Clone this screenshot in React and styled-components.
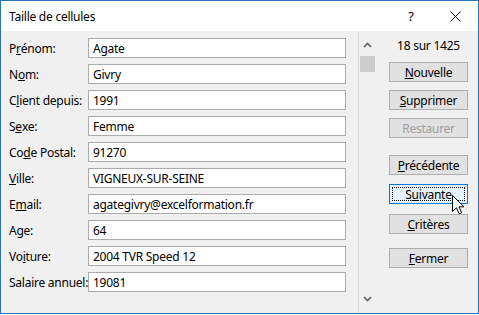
import React from 'react';
import styled, { createGlobalStyle } from 'styled-components';

const GlobalStyle = createGlobalStyle`
  body {
    margin: 0;
    background: #ffffff;
    font-family: "Noto Sans", "Open Sans", sans-serif;
    font-size: 12px;
    letter-spacing: -0.25px;
    color: #000;
  }
`;

const Window = styled.div`
  position: relative;
  width: 479px;
  height: 314px;
  box-sizing: border-box;
  border: 1px solid #2b73b8;
  background: #f0f0f0;
  display: flex;
  flex-direction: column;
`;

const TitleBar = styled.div`
  height: 30px;
  flex-shrink: 0;
  background: #ffffff;
  display: flex;
  align-items: center;
  padding-left: 8px;
  font-size: 12px;

  .title {
    flex: 1;
  }

  .help {
    width: 46px;
    text-align: center;
    font-size: 13px;
    margin-right: -2px;
  }

  .close {
    width: 46px;
    display: flex;
    justify-content: center;
  }
`;

const Body = styled.div`
  flex: 1;
  display: flex;
`;

const Form = styled.div`
  width: 349px;
  padding: 7px 0 0 8px;
  display: grid;
  grid-template-columns: 79px 258px;
  grid-auto-rows: 20px;
  row-gap: 6px;
  align-content: start;
`;

const Label = styled.label`
  display: flex;
  align-items: center;
  white-space: nowrap;
`;

const Field = styled.div`
  box-sizing: border-box;
  height: 20px;
  border: 1px solid #ababab;
  background: #ffffff;
  padding: 0 4px;
  display: flex;
  align-items: center;
  white-space: nowrap;
`;

const ScrollBar = styled.div`
  width: 17px;
  border-left: 1px solid #dcdcdc;
  display: flex;
  flex-direction: column;
  align-items: center;

  .arrow {
    height: 17px;
    display: flex;
    align-items: center;
    justify-content: center;
  }

  .up {
    margin-top: 5px;
  }

  .thumb {
    width: 15px;
    height: 16px;
    background: #cdcdcd;
    margin-top: 3px;
  }

  .spacer {
    flex: 1;
  }

  .down {
    margin-bottom: 6px;
  }
`;

const Side = styled.div`
  flex: 1;
  display: flex;
  flex-direction: column;
  padding-left: 13px;
`;

const Counter = styled.div`
  width: 79px;
  text-align: center;
  margin-top: 7px;
  height: 16px;
  line-height: 16px;
`;

const Button = styled.div`
  position: relative;
  box-sizing: border-box;
  width: 79px;
  height: 20px;
  margin-top: ${({ $gap }) => $gap}px;
  border: 1px solid ${({ $focused }) => ($focused ? '#0078d7' : '#adadad')};
  background: ${({ $focused }) => ($focused ? '#e5f1fb' : '#e1e1e1')};
  color: ${({ $disabled }) => ($disabled ? '#a0a0a0' : '#000')};
  display: flex;
  align-items: center;
  justify-content: center;

  ${({ $focused }) =>
    $focused &&
    `
    &::after {
      content: '';
      position: absolute;
      inset: 2px;
      border: 1px dotted #000;
    }
  `}
`;

const Cursor = styled.svg`
  position: absolute;
  left: 451px;
  top: 194px;
`;

const Key = ({ children }) => <u>{children}</u>;

const rows = [
  [<>P<Key>r</Key>énom:</>, 'Agate'],
  [<>N<Key>o</Key>m:</>, 'Givry'],
  [<>C<Key>l</Key>ient depuis:</>, '1991'],
  [<>S<Key>e</Key>xe:</>, 'Femme'],
  [<>Co<Key>d</Key>e Postal:</>, '91270'],
  [<><Key>V</Key>ille:</>, 'VIGNEUX-SUR-SEINE'],
  [<>E<Key>m</Key>ail:</>, 'agategivry@excelformation.fr'],
  [<>Age:</>, '64'],
  [<>Vo<Key>i</Key>ture:</>, '2004 TVR Speed 12'],
  [<>Salaire annuel:</>, '19081'],
];

const buttons = [
  { label: <><Key>N</Key>ouvelle</>, gap: 8 },
  { label: <><Key>S</Key>upprimer</>, gap: 8 },
  { label: <>Restaurer</>, gap: 8, disabled: true },
  { label: <><Key>P</Key>récédente</>, gap: 17 },
  { label: <>S<Key>u</Key>ivante</>, gap: 9, focused: true },
  { label: <><Key>C</Key>ritères</>, gap: 10 },
  { label: <><Key>F</Key>ermer</>, gap: 14 },
];

const Chevron = ({ up }) => (
  <svg width="9" height="6" viewBox="0 0 9 6">
    <path
      d={up ? 'M1 5 L4.5 1.5 L8 5' : 'M1 1 L4.5 4.5 L8 1'}
      fill="none"
      stroke="#606060"
      strokeWidth="1.6"
    />
  </svg>
);

export default function App() {
  return (
    <>
      <GlobalStyle />
      <Window>
        <TitleBar>
          <span className="title">Taille de cellules</span>
          <span className="help">?</span>
          <span className="close">
            <svg width="11" height="11" viewBox="0 0 11 11">
              <path d="M0.5 0.5 L10.5 10.5 M10.5 0.5 L0.5 10.5" stroke="#000" strokeWidth="1" />
            </svg>
          </span>
        </TitleBar>
        <Body>
          <Form>
            {rows.map(([label, value], i) => (
              <React.Fragment key={i}>
                <Label>{label}</Label>
                <Field>{value}</Field>
              </React.Fragment>
            ))}
          </Form>
          <ScrollBar>
            <div className="arrow up"><Chevron up /></div>
            <div className="thumb" />
            <div className="spacer" />
            <div className="arrow down"><Chevron /></div>
          </ScrollBar>
          <Side>
            <Counter>18 sur 1425</Counter>
            {buttons.map((b, i) => (
              <Button key={i} $gap={b.gap} $disabled={b.disabled} $focused={b.focused}>
                {b.label}
              </Button>
            ))}
          </Side>
        </Body>
        <Cursor width="13" height="20" viewBox="0 0 13 20">
          <path
            d="M0.5 0.5 L0.5 16.5 L4.5 12.8 L7.2 18.8 L9.6 17.7 L7 11.8 L12 11.8 Z"
            fill="#fff"
            stroke="#000"
            strokeWidth="1"
            strokeLinejoin="miter"
          />
        </Cursor>
      </Window>
    </>
  );
}
